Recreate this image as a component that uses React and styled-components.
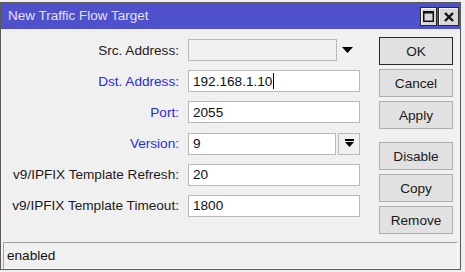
import React from 'react';
import styled, { createGlobalStyle } from 'styled-components';

const GlobalStyle = createGlobalStyle`
  html, body {
    margin: 0;
    padding: 0;
    background: #f0f0f0;
  }
  body {
    font-family: "Liberation Sans", Arial, sans-serif;
    font-size: 13.6px;
    color: #1a1a1a;
  }
`;

const Page = styled.div`
  width: 465px;
  height: 272px;
  padding-top: 2px;
  box-sizing: border-box;
`;

const Window = styled.div`
  width: 461px;
  height: 268px;
  box-sizing: border-box;
  border: 1px solid #5a5a5a;
  background: #f0f0f0;
  display: flex;
  flex-direction: column;
`;

const TitleBar = styled.div`
  height: 26px;
  flex: none;
  background: #4e50cc;
  display: flex;
  align-items: center;
  padding: 0 1px 0 7px;
`;

const Title = styled.div`
  flex: 1;
  color: #e2e2ff;
  font-size: 13.5px;
  padding-bottom: 1px;
`;

const TitleButtons = styled.div`
  display: flex;
  gap: 1px;
  margin-top: 1px;
`;

const CaptionButton = styled.div`
  width: ${p => p.$w}px;
  height: 19px;
  box-sizing: border-box;
  border: 1px solid #2a2a2a;
  background: #d8d8d8;
  box-shadow: inset 1px 1px 0 #f4f4f4;
  display: flex;
  align-items: center;
  justify-content: center;
`;

const Body = styled.div`
  flex: 1;
  display: flex;
  padding-top: 8px;
`;

const Form = styled.div`
  display: grid;
  grid-template-columns: 178px 172px;
  grid-auto-rows: 22px;
  column-gap: 9px;
  row-gap: 9.2px;
  padding-top: 2px;
`;

const Label = styled.label`
  display: flex;
  align-items: center;
  justify-content: flex-end;
  white-space: nowrap;
  color: ${p => (p.$required ? '#2b2be4' : '#1c1c1c')};
`;

const FieldRow = styled.div`
  display: flex;
  align-items: stretch;
  gap: 2px;
`;

const Input = styled.div`
  flex: 1;
  box-sizing: border-box;
  border: 1px solid #b9b9b9;
  background: ${p => (p.$disabled ? '#f0f0f0' : '#ffffff')};
  display: flex;
  align-items: center;
  padding-left: 4px;
  color: #111;
  ${p => p.$narrow && 'flex: none; width: 149px;'}
`;

const Caret = styled.span`
  display: inline-block;
  width: 1px;
  height: 16px;
  background: #000;
  margin-left: 1px;
`;

const DropArrow = styled.div`
  flex: 1;
  display: flex;
  align-items: center;
  justify-content: center;
  padding-right: 4px;
`;

const DropButton = styled.div`
  width: 22px;
  flex: none;
  box-sizing: border-box;
  border: 1px solid #b9b9b9;
  background: #f0f0f0;
  display: flex;
  align-items: center;
  justify-content: center;
`;

const Buttons = styled.div`
  margin-left: 19px;
  display: flex;
  flex-direction: column;
  gap: 4px;
`;

const Button = styled.div`
  width: 74px;
  height: 28px;
  box-sizing: border-box;
  border: 1px solid ${p => (p.$default ? '#2a2a2a' : '#adadad')};
  background: #e1e1e1;
  display: flex;
  align-items: center;
  justify-content: center;
  color: #1a1a1a;
  margin-top: ${p => p.$gapBefore || 0}px;
`;

const StatusBar = styled.div`
  height: 27px;
  flex: none;
  margin: 0 2px 0 2px;
  box-sizing: border-box;
  border-top: 1px solid #a0a0a0;
  border-left: 1px solid #a0a0a0;
  border-right: 1px solid #ffffff;
  border-bottom: 1px solid #ffffff;
  display: flex;
  align-items: center;
  padding-left: 3px;
  padding-bottom: 1px;
  color: #111;
`;

const fields = [
  { label: 'Src. Address:', kind: 'combo' },
  { label: 'Dst. Address:', value: '192.168.1.10', required: true, caret: true },
  { label: 'Port:', value: '2055', required: true },
  { label: 'Version:', value: '9', required: true, kind: 'select' },
  { label: 'v9/IPFIX Template Refresh:', value: '20' },
  { label: 'v9/IPFIX Template Timeout:', value: '1800' },
];

const actions = [
  { text: 'OK', isDefault: true },
  { text: 'Cancel' },
  { text: 'Apply' },
  { text: 'Disable', gap: 9 },
  { text: 'Copy' },
  { text: 'Remove' },
];

function Field({ field }) {
  if (field.kind === 'combo') {
    return (
      <FieldRow>
        <Input $disabled $narrow />
        <DropArrow>
          <svg width="11" height="6" viewBox="0 0 11 6">
            <path d="M0 0 H11 L5.5 6 Z" fill="#000" />
          </svg>
        </DropArrow>
      </FieldRow>
    );
  }
  if (field.kind === 'select') {
    return (
      <FieldRow>
        <Input>{field.value}</Input>
        <DropButton>
          <svg width="9" height="9" viewBox="0 0 9 9">
            <rect x="0" y="0" width="9" height="2" fill="#000" />
            <path d="M0 3 H9 L4.5 8 Z" fill="#000" />
            <rect x="3" y="3" width="3" height="2" fill="#000" />
          </svg>
        </DropButton>
      </FieldRow>
    );
  }
  return (
    <FieldRow>
      <Input>
        {field.value}
        {field.caret && <Caret />}
      </Input>
    </FieldRow>
  );
}

export default function App() {
  return (
    <Page>
      <GlobalStyle />
      <Window>
        <TitleBar>
          <Title>New Traffic Flow Target</Title>
          <TitleButtons>
            <CaptionButton $w={17}>
              <svg width="11" height="11" viewBox="0 0 11 11">
                <rect x="0.75" y="0.75" width="9.5" height="9.5" fill="none" stroke="#111" strokeWidth="1.5" />
                <rect x="0" y="0" width="11" height="2.5" fill="#111" />
              </svg>
            </CaptionButton>
            <CaptionButton $w={21}>
              <svg width="10" height="10" viewBox="0 0 10 10">
                <path d="M1 1 L9 9 M9 1 L1 9" stroke="#111" strokeWidth="2.4" />
              </svg>
            </CaptionButton>
          </TitleButtons>
        </TitleBar>
        <Body>
          <Form>
            {fields.map(f => (
              <React.Fragment key={f.label}>
                <Label $required={f.required}>{f.label}</Label>
                <Field field={f} />
              </React.Fragment>
            ))}
          </Form>
          <Buttons>
            {actions.map(a => (
              <Button key={a.text} $default={a.isDefault} $gapBefore={a.gap}>
                {a.text}
              </Button>
            ))}
          </Buttons>
        </Body>
        <StatusBar>enabled</StatusBar>
      </Window>
    </Page>
  );
}
